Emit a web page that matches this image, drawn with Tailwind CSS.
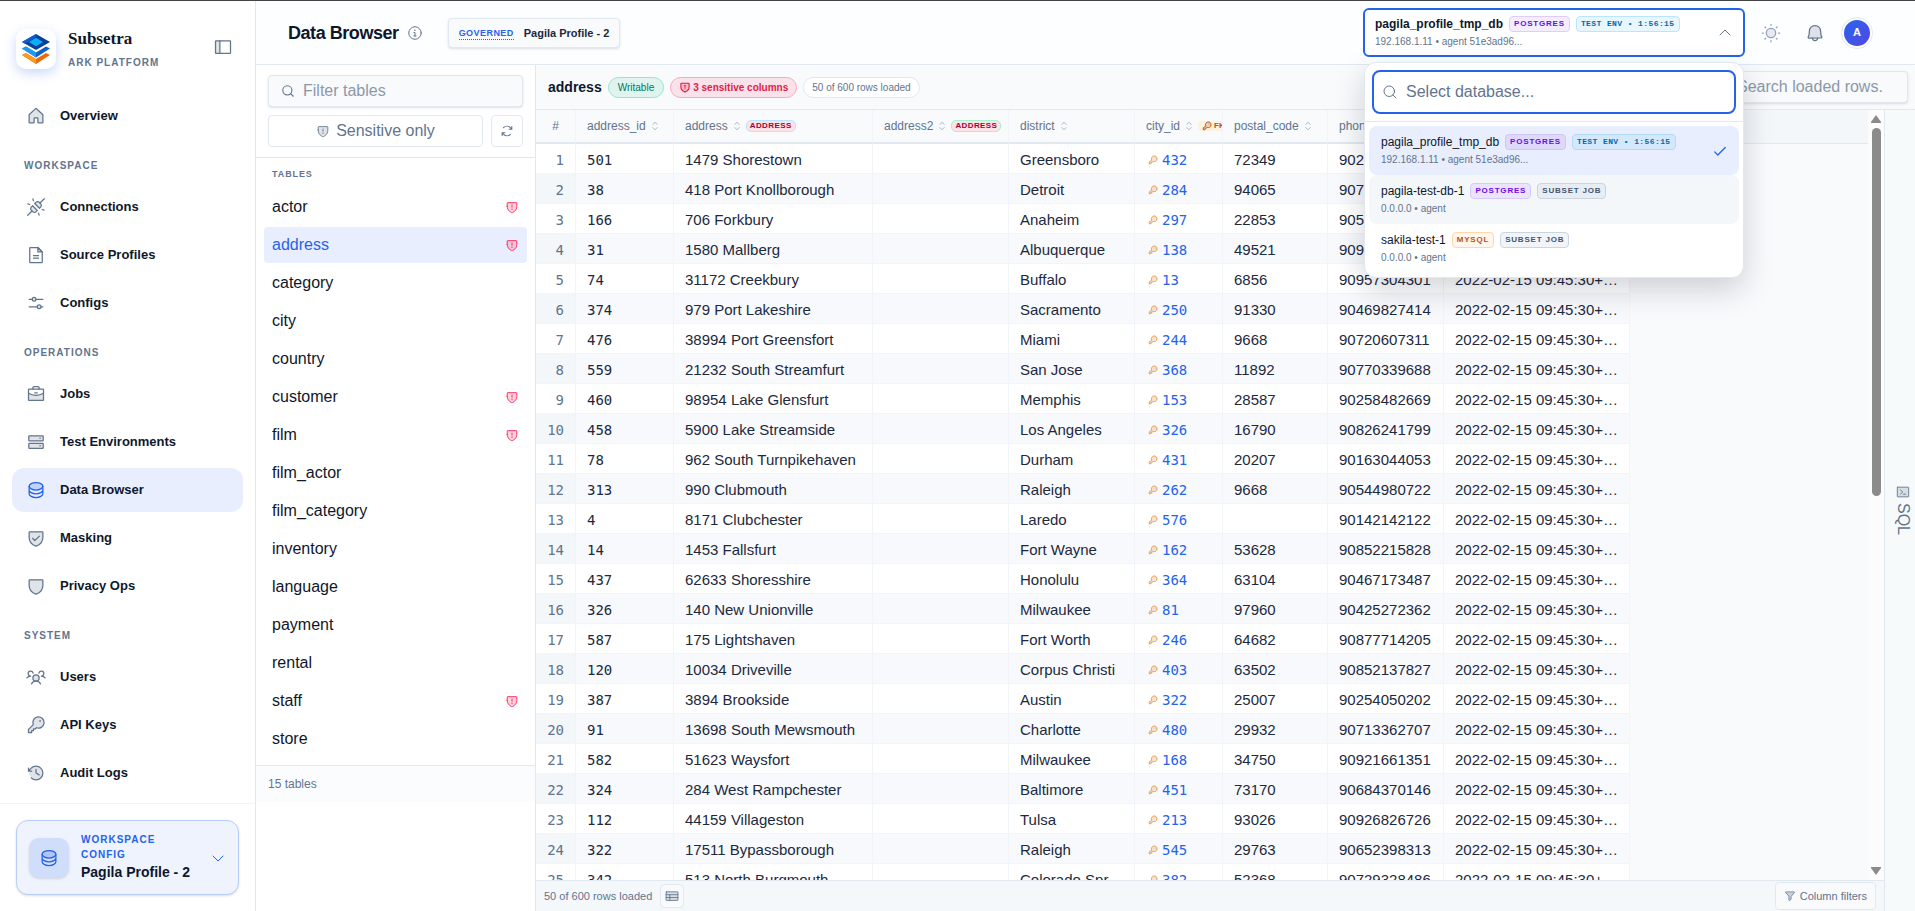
<!DOCTYPE html>
<html lang="en">
<head>
    <meta charset="UTF-8">
    <meta name="viewport" content="width=device-width, initial-scale=1.0">
    <title>Subsetra - Data Browser</title>
    <script src="https://cdn.jsdelivr.net/npm/@tailwindcss/browser@4"></script>
</head>
<body class="h-screen overflow-hidden bg-white fill-none stroke-current stroke-[16px] font-['Liberation_Sans',Arial,sans-serif] text-slate-900 [stroke-linecap:round] [stroke-linejoin:round]">
    <!-- Icon set -->
    <svg class="hidden">
        <symbol id="i-house" viewBox="0 0 256 256"><path fill="currentColor" fill-opacity=".2" d="M216,115.5V208a8,8,0,0,1-8,8H160a8,8,0,0,1-8-8V160a8,8,0,0,0-8-8H112a8,8,0,0,0-8,8v48a8,8,0,0,1-8,8H48a8,8,0,0,1-8-8V115.5a8,8,0,0,1,2.6-5.9l80-75.5a8,8,0,0,1,10.8,0l80,75.5A8,8,0,0,1,216,115.5Z"/></symbol>
        <symbol id="i-plugs" viewBox="0 0 256 256"><path fill="currentColor" fill-opacity=".2" d="M84,112l60,60-14.6,14.6a32,32,0,0,1-45.3,0L69.4,171.9a32,32,0,0,1,0-45.3Z"/><path fill="currentColor" fill-opacity=".2" d="M112,84l60,60,14.6-14.6a32,32,0,0,0,0-45.3L171.9,69.4a32,32,0,0,0-45.3,0Z"/><path d="M22,234l55-55M179,77l55-55M96,48L88,24M48,96l-24-8M168,232l-8-24M232,168l-24-8"/></symbol>
        <symbol id="i-file" viewBox="0 0 256 256"><path fill="currentColor" fill-opacity=".2" d="M152,32V88h56Z"/><path d="M200,224H56a8,8,0,0,1-8-8V40a8,8,0,0,1,8-8h96l56,56V216A8,8,0,0,1,200,224ZM96,136h64M96,168h64"/></symbol>
        <symbol id="i-sliders" viewBox="0 0 256 256"><circle cx="104" cy="80" r="24" fill="currentColor" fill-opacity=".2"/><circle cx="168" cy="176" r="24" fill="currentColor" fill-opacity=".2"/><path d="M40,80H80M128,80h88M40,176H144M192,176h24"/></symbol>
        <symbol id="i-briefcase" viewBox="0 0 256 256"><path fill="currentColor" fill-opacity=".2" stroke="none" d="M224,118.3A191,191,0,0,1,128,144a191,191,0,0,1-96-25.7V200a8,8,0,0,0,8,8H216a8,8,0,0,0,8-8Z"/><rect x="32" y="64" width="192" height="144" rx="8"/><path d="M168,64V48a16,16,0,0,0-16-16H104A16,16,0,0,0,88,48V64M112,112h32M224,118.3A191,191,0,0,1,128,144a191,191,0,0,1-96-25.7"/></symbol>
        <symbol id="i-drives" viewBox="0 0 256 256"><rect x="36" y="48" width="184" height="64" rx="8" fill="currentColor" fill-opacity=".2"/><rect x="36" y="144" width="184" height="64" rx="8" fill="currentColor" fill-opacity=".2"/><circle cx="180" cy="80" r="10" fill="currentColor" stroke="none"/><circle cx="180" cy="176" r="10" fill="currentColor" stroke="none"/></symbol>
        <symbol id="i-database" viewBox="0 0 256 256"><ellipse cx="128" cy="80" rx="88" ry="48" fill="currentColor" fill-opacity=".2"/><path d="M40,80v48c0,26.5,39.4,48,88,48s88-21.5,88-48V80M40,128v48c0,26.5,39.4,48,88,48s88-21.5,88-48V128"/></symbol>
        <symbol id="i-shield" viewBox="0 0 256 256"><path fill="currentColor" fill-opacity=".2" d="M40,114.8V56a8,8,0,0,1,8-8H208a8,8,0,0,1,8,8v58.8c0,84.2-71.3,112-85.5,116.8a7.5,7.5,0,0,1-5,0C111.3,226.9,40,199,40,114.8Z"/></symbol>
        <symbol id="i-shield-check" viewBox="0 0 256 256"><path fill="currentColor" fill-opacity=".2" d="M40,114.8V56a8,8,0,0,1,8-8H208a8,8,0,0,1,8,8v58.8c0,84.2-71.3,112-85.5,116.8a7.5,7.5,0,0,1-5,0C111.3,226.9,40,199,40,114.8Z"/><path d="M172,104l-60,56-28-28"/></symbol>
        <symbol id="i-shield-warn" viewBox="0 0 256 256"><path fill="currentColor" fill-opacity=".2" d="M40,114.8V56a8,8,0,0,1,8-8H208a8,8,0,0,1,8,8v58.8c0,84.2-71.3,112-85.5,116.8a7.5,7.5,0,0,1-5,0C111.3,226.9,40,199,40,114.8Z"/><path d="M128,92v40"/><circle cx="128" cy="168" r="12" fill="currentColor" stroke="none"/></symbol>
        <symbol id="i-users" viewBox="0 0 256 256"><circle cx="128" cy="140" r="40" fill="currentColor" fill-opacity=".2"/><path d="M196,116a59.8,59.8,0,0,1,48,24M12,140a59.8,59.8,0,0,1,48-24M70.4,216a64.1,64.1,0,0,1,115.2,0M60,116A32,32,0,1,1,91.4,78M164.6,78A32,32,0,1,1,196,116"/></symbol>
        <symbol id="i-key" viewBox="0 0 256 256"><path fill="currentColor" fill-opacity=".2" d="M93.2,122.8A72,72,0,1,1,133.2,162.8L120,176H96v24H72v24H32V184Z"/><circle cx="180" cy="76" r="11" fill="currentColor" stroke="none"/></symbol>
        <symbol id="i-history" viewBox="0 0 256 256"><circle cx="128" cy="128" r="88" fill="currentColor" fill-opacity=".2" stroke="none"/><path d="M128,80v48l40,24M72,104H32V64M67.6,192A88,88,0,1,0,65.8,65.8L32,104"/></symbol>
        <symbol id="i-sidebar" viewBox="0 0 256 256"><path fill="currentColor" fill-opacity=".2" stroke="none" d="M32,48H88V208H32Z"/><rect x="32" y="48" width="192" height="160" rx="8"/><path d="M88,48V208"/></symbol>
        <symbol id="i-info" viewBox="0 0 256 256"><circle cx="128" cy="128" r="100"/><path d="M112,120h16v56M112,176h32"/><circle cx="126" cy="84" r="12" fill="currentColor" stroke="none"/></symbol>
        <symbol id="i-search" viewBox="0 0 256 256"><circle cx="116" cy="116" r="84"/><path d="M175,175l49,49"/></symbol>
        <symbol id="i-refresh" viewBox="0 0 256 256"><path d="M168,96h48V48M216,96L187.7,67.7A88,88,0,0,0,64,67M88,160H40v48M40,160l28.3,28.3A88,88,0,0,0,192,189"/></symbol>
        <symbol id="i-sun" viewBox="0 0 256 256"><circle cx="128" cy="128" r="60" fill="currentColor" fill-opacity=".2"/><path d="M128,30V16M60,60l-9-9M60,196l-9,9M196,60l9-9M196,196l9,9M30,128H16M128,226v14M226,128h14"/></symbol>
        <symbol id="i-bell" viewBox="0 0 256 256"><path fill="currentColor" fill-opacity=".2" d="M56,104a72,72,0,0,1,144,0c0,35.8,8.3,64.6,14.9,76A8,8,0,0,1,208,192H48a8,8,0,0,1-6.9-12C47.7,168.6,56,139.8,56,104Z"/><path d="M96,192a32,32,0,0,0,64,0"/></symbol>
        <symbol id="i-down" viewBox="0 0 256 256"><path d="M208,96l-80,80L48,96"/></symbol>
        <symbol id="i-up" viewBox="0 0 256 256"><path d="M48,160l80-80,80,80"/></symbol>
        <symbol id="i-sort" viewBox="0 0 256 256"><path d="M72,168l56,56,56-56M72,88l56-56,56,56"/></symbol>
        <symbol id="i-check" viewBox="0 0 256 256"><path d="M32,144l56,56L224,64"/></symbol>
        <symbol id="i-funnel" viewBox="0 0 256 256"><path fill="currentColor" fill-opacity=".3" d="M32,53.4A8,8,0,0,1,38,40H218a8,8,0,0,1,6,13.4L152,136v58.7a8,8,0,0,1-3.6,6.7l-32,21.3A8,8,0,0,1,104,216V136Z"/></symbol>
        <symbol id="i-table" viewBox="0 0 256 256"><rect x="20" y="52" width="216" height="156" rx="6" fill="currentColor" fill-opacity=".2"/><path d="M20,104H236M20,156H236M88,104V208"/></symbol>
        <symbol id="i-terminal" viewBox="0 0 256 256"><rect x="24" y="40" width="208" height="176" rx="6" fill="currentColor" fill-opacity=".2"/><path d="M80,88l44,40-44,40M136,168h40"/></symbol>
    </svg>

    <div class="flex h-full border-t border-[#444446]">
        <!-- Sidebar -->
        <aside class="flex w-64 shrink-0 flex-col border-r border-slate-200">
            <div class="flex items-center px-4 pt-[26px]">
                <div class="flex h-10 w-10 items-center justify-center rounded-[10px] bg-white shadow-[0_4px_12px_rgba(37,99,235,0.25)]">
                    <svg class="h-8 w-8 stroke-none" viewBox="0 0 32 32">
                        <path fill="#e96a0c" d="M2 22l4-2 10 6 10-6 4 2-14 9z"/>
                        <path fill="#ff9a1f" d="M2 22l4-2 10 6v5z"/>
                        <path fill="#0d62cf" d="M2 15.500l4-2 10 6 10-6 4 2-14 9z"/>
                        <path fill="#1a9bf3" d="M2 15.500l4-2 10 6v5z"/>
                        <path fill="#0a3f9c" d="M16 1l14 8-14 8L2 9z"/>
                        <path fill="#0b5ed0" d="M16 1L2 9l3 1.700L16 4z"/>
                        <path fill="#08b0fb" d="M16 4.800L23 9l-7 4.200L9 9z"/>
                    </svg>
                </div>
                <div class="ml-3 flex-1">
                    <p class="font-['Liberation_Serif',serif] text-[17px] leading-6 font-bold">Subsetra</p>
                    <p class="mt-1 text-[10px] leading-4 font-bold tracking-widest text-slate-500">ARK PLATFORM</p>
                </div>
                <button type="button" aria-label="Collapse sidebar" class="mr-1.5 mb-1 text-slate-500"><svg class="h-5 w-5"><use href="#i-sidebar"/></svg></button>
            </div>

            <nav class="flex-1 px-3 pt-[23px] text-[13px] font-bold" id="sideNav"></nav>

            <div class="border-t border-slate-100 p-4 pb-4">
                <button type="button" class="flex w-full items-center rounded-xl border border-[#b9cdf9] bg-[#eef3fe] px-3 py-[11px] text-left shadow-sm">
                    <span class="flex h-10 w-10 shrink-0 items-center justify-center rounded-[10px] bg-[#d1defb] text-[#2563eb] shadow-sm"><svg class="h-5 w-5"><use href="#i-database"/></svg></span>
                    <span class="ml-3 flex-1">
                        <span class="block text-[10px] leading-[15px] font-bold tracking-widest text-[#2563eb]">WORKSPACE CONFIG</span>
                        <span class="block text-sm leading-[21px] font-bold whitespace-nowrap">Pagila Profile - 2</span>
                    </span>
                    <svg class="ml-3 h-4 w-4 shrink-0 text-[#2563eb]"><use href="#i-down"/></svg>
                </button>
            </div>
        </aside>

        <div class="flex min-w-0 flex-1 flex-col">
            <!-- Top bar -->
            <header class="flex h-16 shrink-0 items-center border-b border-slate-200 bg-[#fdfeff] pr-[42px] pl-8">
                <h1 class="text-lg font-bold tracking-tight">Data Browser</h1>
                <svg class="ml-2 h-4 w-4 text-slate-500"><use href="#i-info"/></svg>
                <div class="ml-[25px] flex h-[30px] items-center gap-2.5 rounded border border-slate-200 bg-slate-50 px-2.5 text-[11px] font-bold text-slate-800 shadow-sm">
                    <abbr class="mt-0.5 border-b border-dotted border-[#2563eb] text-[9px] leading-3 tracking-wider text-[#2563eb] no-underline">GOVERNED</abbr>
                    <span class="pt-0.5">Pagila Profile - 2</span>
                </div>

                <div class="ml-auto flex items-center gap-2">
                    <div class="relative z-20">
                        <button type="button" aria-haspopup="listbox" aria-expanded="true" class="flex h-[49px] w-[382px] items-center justify-between rounded-md border-2 border-[#2563eb] bg-white px-[10px] text-left">
                            <span>
                                <span class="flex items-center gap-1.5">
                                    <span class="text-xs font-bold">pagila_profile_tmp_db</span>
                                    <span class="rounded border border-[#dfccfb] bg-[#f4edfe] px-1 text-[8px] leading-[14px] font-bold tracking-widest text-violet-700">POSTGRES</span>
                                    <span class="rounded border border-sky-200 bg-[#e8f7fe] px-1 font-['Liberation_Mono',monospace] text-[8px] leading-[14px] font-bold tracking-wider text-sky-700">TEST ENV • 1:56:15</span>
                                </span>
                                <span class="mt-0.5 block text-[10px] leading-[15px] text-slate-500">192.168.1.11 • agent 51e3ad96...</span>
                            </span>
                            <svg class="h-4 w-4 text-slate-500"><use href="#i-up"/></svg>
                        </button>

                        <!-- Database picker -->
                        <div class="absolute inset-x-px top-full mt-[5px] rounded-xl border border-slate-200 bg-white shadow-[0_12px_30px_rgba(15,23,42,0.18)]">
                            <div class="border-b border-slate-200 p-[7px]">
                                <label class="flex h-11 items-center gap-2 rounded-lg border-2 border-[#2563eb] px-2">
                                    <svg class="h-4 w-4 shrink-0 text-slate-500"><use href="#i-search"/></svg>
                                    <input type="text" aria-label="Select database" placeholder="Select database..." class="w-full text-base outline-none placeholder:text-slate-500">
                                </label>
                            </div>
                            <div class="p-1" role="listbox">
                                <button type="button" role="option" aria-selected="true" class="flex w-full items-center justify-between rounded-lg bg-[#e8eefd] px-3 py-2 text-left">
                                    <span>
                                        <span class="flex items-center gap-1.5">
                                            <span class="text-xs">pagila_profile_tmp_db</span>
                                            <span class="rounded border border-[#cfc5f8] bg-[#ded9fb] px-1 text-[8px] leading-[14px] font-bold tracking-widest text-violet-700">POSTGRES</span>
                                            <span class="rounded border border-[#b0dcf8] bg-[#d3e9fb] px-1 font-['Liberation_Mono',monospace] text-[8px] leading-[14px] font-bold tracking-wider text-sky-700">TEST ENV • 1:56:15</span>
                                        </span>
                                        <span class="mt-0.5 block text-[10px] leading-[15px] text-slate-500">192.168.1.11 • agent 51e3ad96...</span>
                                    </span>
                                    <svg class="h-3.5 w-3.5 text-[#2563eb]" stroke-width="24"><use href="#i-check"/></svg>
                                </button>
                                <button type="button" role="option" aria-selected="false" class="block w-full rounded-lg bg-[#f3f7fa] px-3 py-2 text-left">
                                    <span class="flex items-center gap-1.5">
                                        <span class="text-xs">pagila-test-db-1</span>
                                        <span class="rounded border border-[#d8c8fa] bg-[#eae4fc] px-1 text-[8px] leading-[14px] font-bold tracking-widest text-violet-700">POSTGRES</span>
                                        <span class="rounded border border-slate-300 bg-slate-200/70 px-1 text-[8px] leading-[14px] font-bold tracking-widest text-slate-600">SUBSET JOB</span>
                                    </span>
                                    <span class="mt-0.5 block text-[10px] leading-[15px] text-slate-500">0.0.0.0 • agent</span>
                                </button>
                                <button type="button" role="option" aria-selected="false" class="block w-full rounded-lg px-3 py-2 text-left">
                                    <span class="flex items-center gap-1.5">
                                        <span class="text-xs">sakila-test-1</span>
                                        <span class="rounded border border-orange-200 bg-orange-50 px-1 text-[8px] leading-[14px] font-bold tracking-widest text-[#c2500c]">MYSQL</span>
                                        <span class="rounded border border-slate-300 bg-slate-100 px-1 text-[8px] leading-[14px] font-bold tracking-widest text-slate-600">SUBSET JOB</span>
                                    </span>
                                    <span class="mt-0.5 block text-[10px] leading-[15px] text-slate-500">0.0.0.0 • agent</span>
                                </button>
                            </div>
                        </div>
                    </div>
                    <button type="button" aria-label="Toggle theme" class="flex h-9 w-9 items-center justify-center text-slate-400"><svg class="h-5 w-5"><use href="#i-sun"/></svg></button>
                    <button type="button" aria-label="Notifications" class="flex h-9 w-9 items-center justify-center text-slate-500"><svg class="h-5 w-5"><use href="#i-bell"/></svg></button>
                    <button type="button" aria-label="Account" class="h-8 w-8 rounded-full border border-slate-200 bg-white p-0.5">
                        <span class="flex h-full w-full items-center justify-center rounded-full bg-linear-to-br from-[#2563eb] to-[#4f46e5] text-[11px] font-bold text-white">A</span>
                    </button>
                </div>
            </header>

            <div class="flex min-h-0 flex-1">
                <!-- Table list -->
                <section class="w-[280px] shrink-0 border-r border-slate-200">
                    <div class="border-b border-slate-200 px-3 pt-2.5 pb-[10px]">
                        <label class="flex h-8 items-center gap-2 rounded border border-slate-200 bg-slate-50 px-3 shadow-sm">
                            <svg class="h-3.5 w-3.5 shrink-0 text-slate-500" stroke-width="20"><use href="#i-search"/></svg>
                            <input type="text" aria-label="Filter tables" placeholder="Filter tables" class="w-full text-base outline-none placeholder:text-[#8b98a9]">
                        </label>
                        <div class="mt-2 flex gap-2">
                            <button type="button" class="flex h-8 flex-1 items-center justify-center gap-1.5 rounded border border-slate-200 text-base text-slate-500">
                                <svg class="h-3.5 w-3.5"><use href="#i-shield-warn"/></svg>Sensitive only
                            </button>
                            <button type="button" aria-label="Refresh" class="flex h-8 w-8 items-center justify-center rounded border border-slate-200 text-slate-500"><svg class="h-3.5 w-3.5" stroke-width="20"><use href="#i-refresh"/></svg></button>
                        </div>
                    </div>
                    <h2 class="px-4 pt-2 pb-[7px] text-[9px] leading-4 font-bold tracking-widest text-slate-500">TABLES</h2>
                    <div class="flex flex-col gap-0.5 px-2 pb-2" id="tableList"></div>
                    <p class="border-t border-slate-200 bg-[#fbfcfe] px-3 py-[10px] text-xs text-slate-500">15 tables</p>
                </section>

                <!-- Data grid -->
                <section class="flex min-w-0 flex-1 flex-col">
                    <div class="flex h-[45px] shrink-0 items-center gap-1.5 border-b border-slate-200 bg-[#f8fafc] pr-[7px] pl-3">
                        <h2 class="text-sm font-bold">address</h2>
                        <span class="rounded-full border border-[#9be3cb] bg-[#dff4ee] px-[9px] text-[10px] leading-[19px] text-[#047857]">Writable</span>
                        <span class="flex items-center gap-0.5 rounded-full border border-[#f9a8bd] bg-[#fae2ea] px-2 text-[10px] leading-[19px] font-bold text-[#e11d48]"><svg class="h-3 w-3" stroke-width="24"><use href="#i-shield-warn"/></svg>3 sensitive columns</span>
                        <span class="rounded-full border border-slate-200 bg-white px-2 text-[10px] leading-[19px] text-slate-500">50 of 600 rows loaded</span>
                        <input type="text" aria-label="Search loaded rows" placeholder="Search loaded rows..." class="ml-auto h-8 w-52 rounded border border-slate-200 bg-slate-50 pr-6 pl-9 text-base shadow-sm placeholder:text-[#8b98a9]">
                    </div>

                    <div class="flex min-h-0 flex-1">
                        <div class="flex min-w-0 flex-1 flex-col">
                            <div class="flex min-h-0 flex-1 overflow-hidden bg-[#f9fafc]">
                                <table class="w-[1094px] shrink-0 table-fixed border-separate border-spacing-0 self-start">
                                    <colgroup>
                                        <col class="w-10"><col class="w-[98px]"><col class="w-[199px]"><col class="w-[136px]"><col class="w-[126px]"><col class="w-[88px]"><col class="w-[105px]"><col class="w-[116px]"><col class="w-[186px]">
                                    </colgroup>
                                    <thead>
                                        <tr class="h-[34px] bg-[#f8fafc] text-left text-xs text-slate-500" id="gridHead"></tr>
                                    </thead>
                                    <tbody class="text-[15px] text-slate-800" id="gridBody"></tbody>
                                </table>
                                <div class="flex-1"><div class="h-[34px] border-b border-slate-200 bg-[#f3f7fa]"></div></div>
                                <!-- Scroll track -->
                                <div class="flex w-4 flex-col items-center bg-[#fcfcfc] pt-1 pb-1 text-[#8b8b8b]">
                                    <svg class="h-2.5 w-2.5 stroke-none" viewBox="0 0 10 10"><path fill="currentColor" d="M5 1l5 7v1H0V8z"/></svg>
                                    <div class="mt-1 h-[368px] w-[9px] rounded-full bg-[#8b8b8b]"></div>
                                    <svg class="mt-auto h-2.5 w-2.5 stroke-none" viewBox="0 0 10 10"><path fill="currentColor" d="M5 9L0 2V1h10v1z"/></svg>
                                </div>
                            </div>
                            <footer class="flex h-[31px] shrink-0 items-center border-t border-slate-200 bg-[#f5f8fb] pr-2 pl-2 text-[11px] text-slate-500">
                                <span>50 of 600 rows loaded</span>
                                <button type="button" aria-label="Column layout" class="ml-2 flex h-6 w-6 items-center justify-center rounded border border-slate-200 bg-slate-50"><svg class="h-3.5 w-3.5"><use href="#i-table"/></svg></button>
                                <button type="button" class="ml-auto flex h-7 items-center gap-1 rounded border border-slate-200 bg-slate-50 px-2"><svg class="h-3 w-3"><use href="#i-funnel"/></svg>Column filters</button>
                            </footer>
                        </div>
                        <button type="button" class="flex w-[31px] shrink-0 flex-col items-center justify-center gap-1 border-l border-slate-200 bg-[#f6fafb] pl-1.5 text-slate-500">
                            <svg class="h-3.5 w-3.5"><use href="#i-terminal"/></svg>
                            <span class="text-base leading-5 [writing-mode:vertical-rl]">SQL</span>
                        </button>
                    </div>
                </section>
            </div>
        </div>
    </div>

    <script>
        const nav = [
            { items: [['house', 'Overview']] },
            { title: 'WORKSPACE', items: [['plugs', 'Connections'], ['file', 'Source Profiles'], ['sliders', 'Configs']] },
            { title: 'OPERATIONS', items: [['briefcase', 'Jobs'], ['drives', 'Test Environments'], ['database', 'Data Browser'], ['shield-check', 'Masking'], ['shield', 'Privacy Ops']] },
            { title: 'SYSTEM', items: [['users', 'Users'], ['key', 'API Keys'], ['history', 'Audit Logs']] }
        ];

        document.getElementById('sideNav').innerHTML = nav.map(group => `
            ${group.title ? `<h2 class="px-3 pt-5 pb-[11px] text-[10px] leading-4 font-bold tracking-widest text-slate-500">${group.title}</h2>` : ''}
            <div class="flex flex-col gap-1">
                ${group.items.map(([icon, label]) => `
                    <a href="#" class="flex h-11 items-center gap-3.5 rounded-xl px-3.5 ${label === 'Data Browser' ? 'bg-[#e8eefd]' : ''}">
                        <svg class="h-5 w-5 ${label === 'Data Browser' ? 'text-[#2563eb]' : 'text-slate-500'}"><use href="#i-${icon}"/></svg>${label}
                    </a>`).join('')}
            </div>`).join('');

        const tables = ['actor', 'address', 'category', 'city', 'country', 'customer', 'film', 'film_actor', 'film_category', 'inventory', 'language', 'payment', 'rental', 'staff', 'store'];
        const sensitive = ['actor', 'address', 'customer', 'film', 'staff'];

        document.getElementById('tableList').innerHTML = tables.map(name => `
            <button type="button" class="flex h-9 items-center justify-between rounded px-2 text-left text-base ${name === 'address' ? 'bg-[#e8eefd] text-[#2563eb]' : ''}">
                ${name}${sensitive.includes(name) ? '<svg class="h-3.5 w-3.5 text-rose-500"><use href="#i-shield-warn"/></svg>' : ''}
            </button>`).join('');

        const tag = border => `<span class="rounded-[5px] border ${border} bg-[#fde2e7] px-[3px] text-[8px] leading-[10px] font-bold tracking-wider text-rose-800">ADDRESS</span>`;
        const columns = [
            ['address_id', ''],
            ['address', tag('border-sky-200')],
            ['address2', tag('border-emerald-200')],
            ['district', ''],
            ['city_id', '<span class="flex shrink-0 items-center gap-0.5 rounded bg-orange-100/70 px-1 text-[8px] leading-[10px] font-bold text-[#c2500c]"><svg class="h-2.5 w-2.5" stroke-width="24"><use href="#i-key"/></svg>FK</span>'],
            ['postal_code', ''],
            ['phone', ''],
            ['last_update', '']
        ];

        document.getElementById('gridHead').innerHTML = `
            <th class="border-r border-b-2 border-r-slate-100 border-b-slate-200 text-center font-normal">#</th>` + columns.map(([name, extra]) => `
            <th class="overflow-hidden border-r border-b-2 border-r-slate-100 border-b-slate-200 pl-[11px] font-normal">
                <div class="flex items-center gap-1"><span>${name}</span><svg class="h-2.5 w-2.5 shrink-0 text-slate-400" stroke-width="20"><use href="#i-sort"/></svg>${extra}</div>
            </th>`).join('');

        const rows = [
            [501, '1479 Shorestown', 'Greensboro', 432, '72349', '90212345678'],
            [38, '418 Port Knollborough', 'Detroit', 284, '94065', '90712345678'],
            [166, '706 Forkbury', 'Anaheim', 297, '22853', '90512345678'],
            [31, '1580 Mallberg', 'Albuquerque', 138, '49521', '90912345678'],
            [74, '31172 Creekbury', 'Buffalo', 13, '6856', '90957304301'],
            [374, '979 Port Lakeshire', 'Sacramento', 250, '91330', '90469827414'],
            [476, '38994 Port Greensfort', 'Miami', 244, '9668', '90720607311'],
            [559, '21232 South Streamfurt', 'San Jose', 368, '11892', '90770339688'],
            [460, '98954 Lake Glensfurt', 'Memphis', 153, '28587', '90258482669'],
            [458, '5900 Lake Streamside', 'Los Angeles', 326, '16790', '90826241799'],
            [78, '962 South Turnpikehaven', 'Durham', 431, '20207', '90163044053'],
            [313, '990 Clubmouth', 'Raleigh', 262, '9668', '90544980722'],
            [4, '8171 Clubchester', 'Laredo', 576, '', '90142142122'],
            [14, '1453 Fallsfurt', 'Fort Wayne', 162, '53628', '90852215828'],
            [437, '62633 Shoresshire', 'Honolulu', 364, '63104', '90467173487'],
            [326, '140 New Unionville', 'Milwaukee', 81, '97960', '90425272362'],
            [587, '175 Lightshaven', 'Fort Worth', 246, '64682', '90877714205'],
            [120, '10034 Driveville', 'Corpus Christi', 403, '63502', '90852137827'],
            [387, '3894 Brookside', 'Austin', 322, '25007', '90254050202'],
            [91, '13698 South Mewsmouth', 'Charlotte', 480, '29932', '90713362707'],
            [582, '51623 Waysfort', 'Milwaukee', 168, '34750', '90921661351'],
            [324, '284 West Rampchester', 'Baltimore', 451, '73170', '90684370146'],
            [112, '44159 Villageston', 'Tulsa', 213, '93026', '90926826726'],
            [322, '17511 Bypassborough', 'Raleigh', 545, '29763', '90652398313'],
            [342, '513 North Burgmouth', 'Colorado Springs', 382, '52368', '90729328486']
        ];

        const cell = (content, extra = '') => `<td class="truncate border-r border-b border-slate-100 pt-[3px] pl-[11px] leading-6 ${extra}">${content}</td>`;

        document.getElementById('gridBody').innerHTML = rows.map(([id, street, district, city, postal, phone], i) => `
            <tr class="h-[30px] ${i % 2 ? 'bg-[#f7f9fc]' : 'bg-white'}">
                ${cell(i + 1, `pr-[11px] text-right font-['DejaVu_Sans_Mono',monospace] text-sm leading-6 text-slate-500 ${i % 2 ? 'bg-[#f3f7fa]' : ''}`)}
                ${cell(id, "pr-2 font-['DejaVu_Sans_Mono',monospace] text-sm leading-6")}
                ${cell(street, 'pr-2')}
                ${cell('')}
                ${cell(district, 'pr-2')}
                ${cell(`<a href="#" class="flex items-center gap-1 pl-0.5"><svg class="h-2.5 w-2.5 text-[#e08a35]" stroke-width="20"><use href="#i-key"/></svg>${city}</a>`, "font-['DejaVu_Sans_Mono',monospace] text-sm leading-6 text-[#2563eb]")}
                ${cell(postal, 'pr-2')}
                ${cell(phone, 'pr-2')}
                ${cell('2022-02-15 09:45:30+00:00', 'pr-2')}
            </tr>`).join('');
    </script>
</body>
</html>
